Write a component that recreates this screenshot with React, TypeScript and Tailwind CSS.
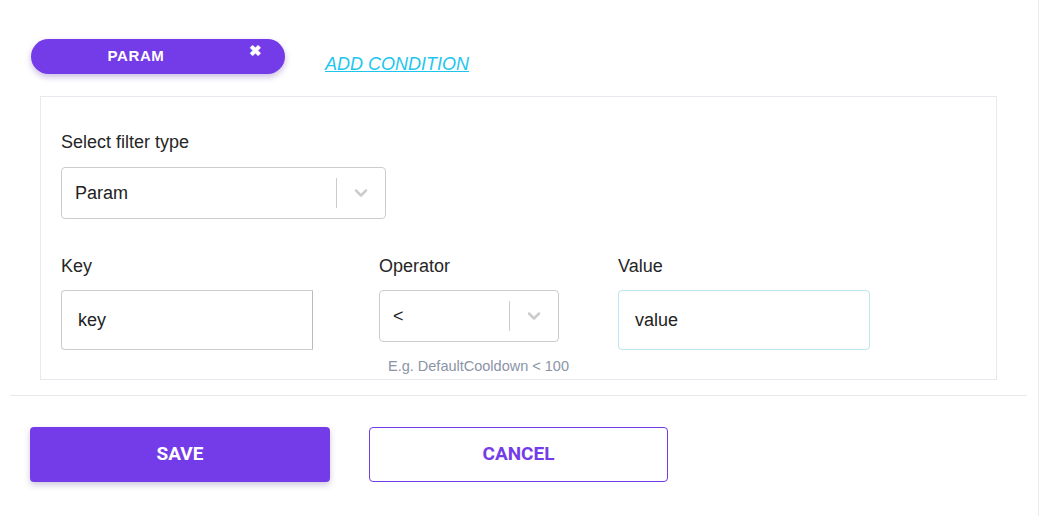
import { ChevronDown } from "lucide-react";

function Chevron() {
  return <ChevronDown className="w-5 h-5 text-[#cccccc]" strokeWidth={3} />;
}

function SelectBox({ value, width, sepGap }: { value: string; width: string; sepGap: string }) {
  return (
    <div
      className={`${width} h-[52px] flex items-center border border-[#cccccc] rounded-[4px] bg-white`}
    >
      <span className="flex-1 pl-[13px] text-[18px] text-[#222]">{value}</span>
      <div className="w-px h-[30px] bg-[#cccccc]" />
      <div className={`${sepGap} flex justify-center`}>
        <Chevron />
      </div>
    </div>
  );
}

export default function App() {
  return (
    <div
      className="w-[1040px] h-[516px] bg-white relative overflow-hidden"
      style={{ fontFamily: '"Liberation Sans", Arial, sans-serif' }}
    >
      {/* right edge of the modal */}
      <div className="absolute right-[1px] top-0 bottom-0 w-px bg-[#ececec]" />

      <div className="pt-[39px] pl-[31px] flex items-start">
        <div className="w-[254px] h-[35px] rounded-full bg-[#743ce8] shadow-[0_3px_6px_rgba(80,40,160,0.3)] flex items-center relative">
          <span className="flex-1 text-center pr-[44px] text-white font-bold text-[15px] tracking-[0.6px]">
            PARAM
          </span>
          <span className="absolute left-[218px] top-[4px] text-white text-[15px] font-bold leading-none">
            ✖
          </span>
        </div>
        <a className="ml-[40px] mt-[14px] text-[18px] italic underline text-[#1ec6ee] leading-[22px]">
          ADD CONDITION
        </a>
      </div>

      <div className="ml-[40px] mt-[21px] w-[957px] h-[284px] border border-[#e6e9ee] px-[20px] pt-[35px]">
        <div className="text-[18px] text-[#262626] leading-[20px]">Select filter type</div>
        <div className="mt-[15px]">
          <SelectBox value="Param" width="w-[325px]" sepGap="w-[48px]" />
        </div>

        <div className="flex mt-[37px]">
          <div className="w-[318px]">
            <div className="text-[18px] text-[#262626] leading-[20px]">Key</div>
            <div className="mt-[14px] w-[252px] h-[60px] border border-[#cccccc] border-r-[#bbbbbb] rounded-l-[4px] flex items-center pl-[16px] text-[18px] text-[#222]">
              key
            </div>
          </div>
          <div className="w-[239px]">
            <div className="text-[18px] text-[#262626] leading-[20px]">Operator</div>
            <div className="mt-[14px]">
              <SelectBox value="<" width="w-[180px]" sepGap="w-[48px]" />
            </div>
            <div className="mt-[16px] ml-[9px] text-[14.5px] text-[#8a94a6] leading-[16px]">
              E.g. DefaultCooldown &lt; 100
            </div>
          </div>
          <div>
            <div className="text-[18px] text-[#262626] leading-[20px]">Value</div>
            <div className="mt-[14px] w-[252px] h-[60px] border border-[#bfe4f2] rounded-[4px] flex items-center pl-[16px] text-[18px] text-[#222]">
              value
            </div>
          </div>
        </div>
      </div>

      <div className="ml-[10px] mt-[15px] w-[1017px] h-px bg-[#e8e8e8]" />

      <div className="flex mt-[31px] ml-[30px] gap-[39px]">
        <button
          className="w-[300px] h-[55px] rounded-[4px] bg-[#743ce8] text-white font-bold text-[19px] shadow-[0_3px_6px_rgba(60,40,120,0.25)]"
          style={{ fontFamily: "Roboto, sans-serif" }}
        >
          SAVE
        </button>
        <button
          className="w-[299px] h-[55px] rounded-[4px] border border-[#743ce8] bg-white text-[#743ce8] font-bold text-[19px]"
          style={{ fontFamily: "Roboto, sans-serif" }}
        >
          CANCEL
        </button>
      </div>
    </div>
  );
}
